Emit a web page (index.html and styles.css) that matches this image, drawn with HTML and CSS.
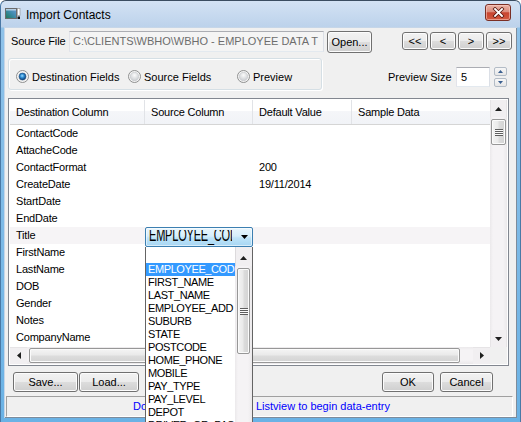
FILE: index.html
```html
<!DOCTYPE html>
<html>
<head>
<meta charset="utf-8">
<title>Import Contacts</title>
<link rel="stylesheet" href="styles.css">
</head>
<body>
<div class="window">
  <div class="titlebar">
    <svg class="app-icon" width="16" height="16" viewBox="0 0 16 16">
      <defs>
        <linearGradient id="ig" x1="0" y1="1" x2="1" y2="0">
          <stop offset="0" stop-color="#1f7a55"/>
          <stop offset="0.5" stop-color="#3d8aa8"/>
          <stop offset="1" stop-color="#6c9ad8"/>
        </linearGradient>
      </defs>
      <rect x="0.5" y="2.5" width="11" height="10" fill="url(#ig)" stroke="#6b6b6b"/>
      <rect x="1" y="3" width="10" height="1.5" fill="#dfe9f5" opacity="0.7"/>
      <rect x="12.5" y="2.5" width="2.5" height="7" fill="#ffffff" stroke="#8a8a8a" stroke-width="0.6"/>
      <rect x="12.5" y="10.5" width="2.5" height="2.5" fill="#111111"/>
    </svg>
    <span class="title-text">Import Contacts</span>
    <div class="close-btn">
      <svg width="13" height="11" viewBox="0 0 13 11">
        <path d="M3 2 L10 9 M10 2 L3 9" stroke="#5b1a12" stroke-width="3.4" stroke-linecap="square"/>
        <path d="M3 2 L10 9 M10 2 L3 9" stroke="#ffffff" stroke-width="1.8" stroke-linecap="square"/>
      </svg>
    </div>
  </div>

  <div class="client">
    <div class="src-row">
      <span class="src-label">Source File</span>
      <div class="textbox src-path">C:\CLIENTS\WBHO\WBHO - EMPLOYEE DATA T</div>
      <div class="btn btn-open">Open...</div>
      <div class="nav">
        <div class="btn nav-btn">&lt;&lt;</div>
        <div class="btn nav-btn">&lt;</div>
        <div class="btn nav-btn">&gt;</div>
        <div class="btn nav-btn">&gt;&gt;</div>
      </div>
    </div>

    <div class="opt-row">
      <div class="groupbox">
        <div class="radio r1">
          <svg width="13" height="13" viewBox="0 0 13 13">
            <defs>
              <radialGradient id="rc" cx="45%" cy="40%" r="60%">
                <stop offset="0" stop-color="#9edcff"/>
                <stop offset="0.45" stop-color="#2f8ed3"/>
                <stop offset="1" stop-color="#0b3c74"/>
              </radialGradient>
              <radialGradient id="ru1" cx="50%" cy="35%" r="65%">
                <stop offset="0" stop-color="#fbfbfb"/>
                <stop offset="1" stop-color="#cdd0d3"/>
              </radialGradient>
            </defs>
            <circle cx="6.5" cy="6.5" r="6" fill="#f5f5f5" stroke="#8e8f8f"/>
            <circle cx="6.5" cy="6.5" r="4.3" fill="url(#ru1)"/>
            <circle cx="6.5" cy="6.5" r="3.4" fill="url(#rc)" stroke="#1b4f86" stroke-width="0.6"/>
          </svg>
          <span>Destination Fields</span>
        </div>
        <div class="radio r2">
          <svg width="13" height="13" viewBox="0 0 13 13">
            <defs>
              <radialGradient id="ru2" cx="50%" cy="35%" r="65%">
                <stop offset="0" stop-color="#fbfbfb"/>
                <stop offset="1" stop-color="#c9ccd0"/>
              </radialGradient>
            </defs>
            <circle cx="6.5" cy="6.5" r="6" fill="#f5f5f5" stroke="#8e8f8f"/>
            <circle cx="6.5" cy="6.5" r="4.2" fill="url(#ru2)" stroke="#c4c6c9" stroke-width="0.6"/>
          </svg>
          <span>Source Fields</span>
        </div>
        <div class="radio r3">
          <svg width="13" height="13" viewBox="0 0 13 13">
            <defs>
              <radialGradient id="ru3" cx="50%" cy="35%" r="65%">
                <stop offset="0" stop-color="#fbfbfb"/>
                <stop offset="1" stop-color="#c9ccd0"/>
              </radialGradient>
            </defs>
            <circle cx="6.5" cy="6.5" r="6" fill="#f5f5f5" stroke="#8e8f8f"/>
            <circle cx="6.5" cy="6.5" r="4.2" fill="url(#ru3)" stroke="#c4c6c9" stroke-width="0.6"/>
          </svg>
          <span>Preview</span>
        </div>
      </div>

      <div class="preview">
        <span class="preview-label">Preview Size</span>
        <div class="textbox spin-input">5</div>
        <div class="updown">
          <div class="ud">
            <svg width="5" height="3" viewBox="0 0 5 3"><path d="M2.5 0 L5 3 L0 3Z" fill="#3a5f8f"/></svg>
          </div>
          <div class="ud">
            <svg width="5" height="3" viewBox="0 0 5 3"><path d="M0 0 L5 0 L2.5 3Z" fill="#3a5f8f"/></svg>
          </div>
        </div>
      </div>
    </div>

    <div class="listview">
      <div class="lv-main">
        <div class="lv-header">
          <div class="hc c1">Destination Column</div>
          <div class="hc c2">Source Column</div>
          <div class="hc c3">Default Value</div>
          <div class="hc c4">Sample Data</div>
        </div>
        <div class="lv-row"><div class="cell c1">ContactCode</div><div class="cell c2"></div><div class="cell c3"></div></div>
        <div class="lv-row"><div class="cell c1">AttacheCode</div><div class="cell c2"></div><div class="cell c3"></div></div>
        <div class="lv-row"><div class="cell c1">ContactFormat</div><div class="cell c2"></div><div class="cell c3">200</div></div>
        <div class="lv-row"><div class="cell c1">CreateDate</div><div class="cell c2"></div><div class="cell c3">19/11/2014</div></div>
        <div class="lv-row"><div class="cell c1">StartDate</div><div class="cell c2"></div><div class="cell c3"></div></div>
        <div class="lv-row"><div class="cell c1">EndDate</div><div class="cell c2"></div><div class="cell c3"></div></div>
        <div class="lv-row hot"><div class="cell c1">Title</div><div class="cell c2"></div><div class="cell c3"></div></div>
        <div class="lv-row"><div class="cell c1">FirstName</div><div class="cell c2"></div><div class="cell c3"></div></div>
        <div class="lv-row"><div class="cell c1">LastName</div><div class="cell c2"></div><div class="cell c3"></div></div>
        <div class="lv-row"><div class="cell c1">DOB</div><div class="cell c2"></div><div class="cell c3"></div></div>
        <div class="lv-row"><div class="cell c1">Gender</div><div class="cell c2"></div><div class="cell c3"></div></div>
        <div class="lv-row"><div class="cell c1">Notes</div><div class="cell c2"></div><div class="cell c3"></div></div>
        <div class="lv-row"><div class="cell c1">CompanyName</div><div class="cell c2"></div><div class="cell c3"></div></div>
      </div>

      <div class="vscroll">
        <div class="sb-btn">
          <svg width="7" height="4" viewBox="0 0 7 4"><path d="M3.5 0 L7 4 L0 4Z" fill="#1e1e1e"/></svg>
        </div>
        <div class="sb-track-v">
          <div class="thumb-v lv-thumb"><div class="grip-v"></div></div>
        </div>
        <div class="sb-btn">
          <svg width="7" height="4" viewBox="0 0 7 4"><path d="M0 0 L7 0 L3.5 4Z" fill="#1e1e1e"/></svg>
        </div>
      </div>

      <div class="hscroll">
        <div class="sb-btn">
          <svg width="4" height="7" viewBox="0 0 4 7"><path d="M0 3.5 L4 0 L4 7Z" fill="#1e1e1e"/></svg>
        </div>
        <div class="sb-track-h">
          <div class="thumb-h"></div>
        </div>
        <div class="sb-btn">
          <svg width="4" height="7" viewBox="0 0 4 7"><path d="M0 0 L4 3.5 L0 7Z" fill="#1e1e1e"/></svg>
        </div>
      </div>
      <div class="corner"></div>
    </div>

    <div class="btn-row">
      <div class="btn b-save">Save...</div>
      <div class="btn b-load">Load...</div>
      <div class="btn b-ok">OK</div>
      <div class="btn b-cancel">Cancel</div>
    </div>

    <div class="statusbar">Double-click a row in the Listview to begin data-entry</div>
  </div>

  <div class="combo">
    <div class="combo-text"><span>EMPLOYEE_COD</span></div>
    <svg class="combo-arrow" width="7" height="4" viewBox="0 0 7 4"><path d="M0 0 L7 0 L3.5 4Z" fill="#000"/></svg>
  </div>

  <div class="popup">
    <div class="popup-items">
      <div class="pi">&nbsp;</div>
      <div class="pi sel">EMPLOYEE_COD</div>
      <div class="pi">FIRST_NAME</div>
      <div class="pi">LAST_NAME</div>
      <div class="pi">EMPLOYEE_ADD</div>
      <div class="pi">SUBURB</div>
      <div class="pi">STATE</div>
      <div class="pi">POSTCODE</div>
      <div class="pi">HOME_PHONE</div>
      <div class="pi">MOBILE</div>
      <div class="pi">PAY_TYPE</div>
      <div class="pi">PAY_LEVEL</div>
      <div class="pi">DEPOT</div>
      <div class="pi">DRIVER_OR_PAS</div>
    </div>
    <div class="popup-scroll">
      <div class="sb-btn">
        <svg width="7" height="4" viewBox="0 0 7 4"><path d="M3.5 0 L7 4 L0 4Z" fill="#1e1e1e"/></svg>
      </div>
      <div class="sb-track-v">
        <div class="thumb-v pop-thumb"><div class="grip-v"></div></div>
      </div>
    </div>
  </div>
</div>
</body>
</html>
```

FILE: styles.css
```css
* { box-sizing: border-box; }
html, body { margin: 0; padding: 0; }
body {
  width: 521px;
  height: 422px;
  overflow: hidden;
  background: #ffffff;
  font-family: "Liberation Sans", Arial, sans-serif;
  font-size: 11px;
  color: #000;
}

.window {
  position: relative;
  width: 521px;
  height: 422px;
  overflow: hidden;
  display: flex;
  flex-direction: column;
  padding: 0 3px 4px 3px;
  border: 1px solid #4a79a6;
  border-top-color: #3b4d61;
  border-bottom: 0;
  border-radius: 6px 6px 0 0;
  background: linear-gradient(to bottom, #d3e2f4 0px, #bcd2eb 26px, #8fc2e9 27px, #6ab2e5 100%);
}

/* title bar */
.titlebar {
  height: 26px;
  margin: 0 -3px;
  padding: 0 9px 0 4px;
  display: flex;
  align-items: center;
  flex: none;
}
.app-icon { flex: none; }
.title-text {
  flex: 1;
  margin-left: 5px;
  font-size: 12px;
  color: #000;
  padding-top: 1px;
}
.close-btn {
  flex: none;
  align-self: flex-start;
  margin-top: 3px;
  width: 26px;
  height: 17px;
  border: 1px solid #7b2f24;
  border-radius: 3px;
  background: linear-gradient(to bottom, #eab3a6 0%, #dc8c7c 45%, #c8442f 52%, #d25a40 100%);
  box-shadow: inset 0 0 0 1px rgba(255, 210, 200, 0.55);
  display: flex;
  align-items: center;
  justify-content: center;
}

/* client */
.client {
  flex: 1;
  position: relative;
  background: #f0f0f0;
  display: flex;
  flex-direction: column;
  box-shadow: inset 1px 1px 0 #c6d6e8, inset -1px -1px 0 #7d8c9c;
}

.src-row {
  display: flex;
  align-items: flex-start;
  margin-top: 4px;
  padding-left: 7px;
  height: 22px;
}
.src-label { width: 58px; line-height: 21px; letter-spacing: -0.1px; }

.textbox {
  border: 1px solid;
  border-color: #abadb3 #dbdfe6 #e3e9ef #e2e3ea;
  background: #fff;
}
.src-path {
  width: 255px;
  height: 21px;
  background: #f4f4f4;
  color: #6d6d6d;
  padding-left: 3px;
  line-height: 19px;
  white-space: nowrap;
  overflow: hidden;
}

.btn {
  display: flex;
  align-items: center;
  justify-content: center;
  border: 1px solid #707070;
  border-radius: 3px;
  background: linear-gradient(to bottom, #f2f2f2 0%, #ebebeb 50%, #dddddd 50%, #cfcfcf 100%);
  box-shadow: inset 0 0 0 1px #fcfcfc;
  white-space: nowrap;
}
.btn-open { margin-left: 3px; width: 45px; height: 22px; }
.nav {
  margin-left: auto;
  margin-right: 5px;
  margin-top: 1px;
  display: flex;
  gap: 2px;
}
.nav-btn { width: 26px; height: 18px; }

/* options */
.opt-row {
  display: flex;
  margin-top: 5px;
  height: 32px;
}
.groupbox {
  margin-left: 4px;
  width: 314px;
  height: 32px;
  border: 1px solid #d5dfe5;
  border-radius: 3px;
  box-shadow: inset 1px 1px 0 #fff, 1px 1px 0 #fff;
  display: flex;
  align-items: center;
  padding: 5px 0 0 7px;
}
.radio { display: flex; align-items: center; }
.radio svg { flex: none; margin-right: 3px; }
.r1 { width: 112px; }
.r2 { width: 109px; }

.preview {
  margin-left: auto;
  margin-right: 10px;
  margin-top: 9px;
  height: 20px;
  display: flex;
  align-items: center;
}
.preview-label { width: 68px; }
.spin-input {
  width: 34px;
  height: 20px;
  padding-left: 4px;
  line-height: 18px;
}
.updown {
  margin-left: 4px;
  display: flex;
  flex-direction: column;
  gap: 2px;
}
.ud {
  width: 13px;
  height: 9px;
  border: 1px solid #b3bcc6;
  border-radius: 2px;
  background: linear-gradient(to bottom, #f7f7f7, #e6e6e6);
  display: flex;
  align-items: center;
  justify-content: center;
}

/* listview */
.listview {
  margin-top: 8px;
  margin-left: 4px;
  width: 501px;
  height: 268px;
  border: 1px solid #828790;
  padding: 1px;
  background: #fff;
  display: grid;
  grid-template-columns: 480px 17px;
  grid-template-rows: 247px 17px;
  flex: none;
}
.lv-main { overflow: hidden; }
.lv-header {
  height: 25px;
  display: flex;
  border-bottom: 1px solid #d5d5d5;
  background: linear-gradient(to bottom, #ffffff 0%, #ffffff 44%, #f5f6f9 45%, #f1f3f7 100%);
}
.hc {
  line-height: 24px;
  padding-left: 6px;
  white-space: nowrap;
  overflow: hidden;
  letter-spacing: -0.2px;
  border-right: 1px solid #e1e3e7;
}
.c1 { width: 135px; flex: none; }
.c2 { width: 108px; flex: none; }
.c3 { width: 99px; flex: none; }
.hc.c4 { flex: 1; border-right: 0; }

.lv-row {
  height: 17px;
  display: flex;
}
.lv-row.hot { background: #f6f4f6; }
.cell {
  line-height: 17px;
  padding-left: 6px;
  white-space: nowrap;
  overflow: hidden;
  letter-spacing: -0.2px;
}

/* scrollbars */
.vscroll {
  display: flex;
  flex-direction: column;
  background: #f1eff1;
  box-shadow: inset 1px 0 0 #e6e4e6, inset -1px 0 0 #e6e4e6;
}
.sb-btn {
  width: 17px;
  height: 17px;
  flex: none;
  display: flex;
  align-items: center;
  justify-content: center;
}
.sb-track-v {
  flex: 1;
  position: relative;
  padding: 0 1px;
  background: linear-gradient(to right, #ebe9eb 0, #f5f3f5 3px, #f5f3f5 13px, #ebe9eb 100%);
}
.thumb-v {
  border: 1px solid #979797;
  border-radius: 2px;
  background: linear-gradient(to right, #f4f4f4 0%, #eaeaea 45%, #dcdcdc 55%, #d3d3d3 100%);
  box-shadow: inset 0 0 0 1px #fbfbfb;
  display: flex;
  align-items: center;
  justify-content: center;
}
.lv-thumb { margin-top: 2px; height: 26px; }
.grip-v {
  width: 8px;
  height: 7px;
  background: repeating-linear-gradient(to bottom, #5e5e5e 0, #5e5e5e 1px, #fbfbfb 1px, #fbfbfb 2px);
}

.hscroll {
  display: flex;
  background: #f1eff1;
  box-shadow: inset 0 1px 0 #e6e4e6;
}
.sb-track-h {
  flex: 1;
  padding: 1px 0;
  background: linear-gradient(to bottom, #ebe9eb 0, #f5f3f5 3px, #f5f3f5 13px, #ebe9eb 100%);
}
.thumb-h {
  margin-left: 2px;
  width: 431px;
  height: 15px;
  border: 1px solid #979797;
  border-radius: 2px;
  background: linear-gradient(to bottom, #f4f4f4 0%, #eaeaea 45%, #dcdcdc 55%, #d3d3d3 100%);
  box-shadow: inset 0 0 0 1px #fbfbfb;
}
.corner { background: #f0f0f0; }

/* buttons */
.btn-row {
  display: flex;
  margin-top: 6px;
  height: 20px;
  padding-left: 9px;
  flex: none;
}
.btn-row .btn { height: 20px; }
.b-save { width: 65px; }
.b-load { width: 60px; margin-left: 1px; }
.b-ok { width: 52px; margin-left: auto; }
.b-cancel { width: 53px; margin-left: 6px; margin-right: 24px; }

/* status */
.statusbar {
  margin-top: 4px;
  margin-left: 2px;
  width: 507px;
  height: 21px;
  border: 1px solid;
  border-color: #a0a0a0 #ffffff #ffffff #a0a0a0;
  color: #0000ff;
  text-align: center;
  line-height: 19px;
  padding-left: 4px;
  white-space: nowrap;
  overflow: hidden;
  flex: none;
}

/* combo editor overlay */
.combo {
  position: absolute;
  left: 144px;
  top: 226px;
  width: 108px;
  height: 20px;
  border: 1px solid #3c7fb1;
  border-radius: 2px;
  background: linear-gradient(to bottom, #eaf6fd 0%, #d6eefb 45%, #bfe4f9 55%, #a6d6f3 100%);
  box-shadow: inset 0 0 0 1px rgba(255, 255, 255, 0.55);
}
.combo-text {
  position: absolute;
  left: 3px;
  top: 2px;
  width: 83px;
  height: 16px;
  overflow: hidden;
}
.combo-text span {
  display: block;
  margin-top: 2px;
  font-size: 11px;
  line-height: 12px;
  letter-spacing: -0.2px;
  white-space: nowrap;
  transform: scaleY(1.6);
  transform-origin: 0 11.3px;
}
.combo-arrow {
  position: absolute;
  left: 95px;
  top: 7px;
}

/* dropdown list */
.popup {
  position: absolute;
  left: 144px;
  top: 246px;
  width: 108px;
  height: 200px;
  border: 1px solid #646464;
  border-top: 0;
  background: #fff;
  display: flex;
}
.popup-items {
  width: 89px;
  padding-top: 3px;
  flex: none;
}
.pi {
  height: 13px;
  line-height: 13px;
  padding-left: 2px;
  white-space: nowrap;
  overflow: hidden;
  letter-spacing: -0.4px;
}
.pi.sel { background: #3399ff; color: #fff; }
.popup-scroll {
  width: 17px;
  flex: none;
  padding-top: 2px;
  display: flex;
  flex-direction: column;
  background: #f1eff1;
  box-shadow: inset 1px 0 0 #dcdadc;
}
.popup-scroll .sb-track-v { padding: 0 2px; }
.pop-thumb { margin-top: 2px; height: 86px; }
```
